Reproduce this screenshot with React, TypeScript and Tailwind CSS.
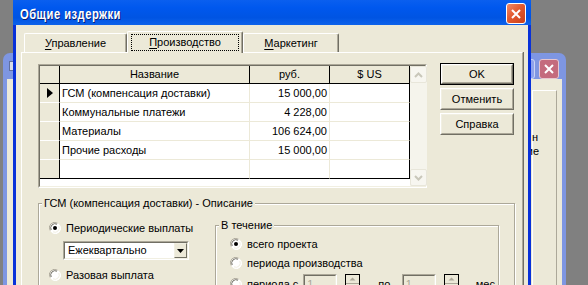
import React from "react";

const font = "font-['Liberation_Sans',Arial,sans-serif] text-[11px] leading-[13px] text-black";

function Radio({ checked }: { checked?: boolean }) {
  return (
    <svg width="12" height="12" viewBox="0 0 12 12" className="shrink-0">
      <circle cx="6" cy="6" r="5.5" fill="#fff" />
      <path d="M1.2 8.5 A5.3 5.3 0 0 1 8.5 1.2" fill="none" stroke="#ACA899" strokeWidth="1" />
      <path d="M2.2 8.0 A4.3 4.3 0 0 1 8.0 2.2" fill="none" stroke="#716F64" strokeWidth="1" />
      <path d="M10.8 3.5 A5.3 5.3 0 0 1 3.5 10.8" fill="none" stroke="#fff" strokeWidth="1" />
      <path d="M9.8 4.0 A4.3 4.3 0 0 1 4.0 9.8" fill="none" stroke="#F1EFE2" strokeWidth="1" />
      {checked && <circle cx="6" cy="6" r="2" fill="#000" />}
    </svg>
  );
}

function RadioRow({ checked, label, className = "" }: { checked?: boolean; label: string; className?: string }) {
  return (
    <div className={`flex items-center gap-[5px] h-[16px] ${className}`}>
      <Radio checked={checked} />
      <span className="whitespace-nowrap">{label}</span>
    </div>
  );
}

function Chevron({ up }: { up?: boolean }) {
  return (
    <svg width="9" height="6" viewBox="0 0 9 6">
      <path d={up ? "M1 5 L4.5 1.5 L8 5" : "M1 1 L4.5 4.5 L8 1"} fill="none" stroke="#C9C7BA" strokeWidth="2" />
    </svg>
  );
}

function ScrollBtn({ up }: { up?: boolean }) {
  return (
    <div className="h-[17px] w-[17px] flex items-center justify-center rounded-[2px] border border-[#E8E6DA] bg-[#F7F6F0]">
      <Chevron up={up} />
    </div>
  );
}

function Button({ label, def }: { label: string; def?: boolean }) {
  return (
    <div className={`h-[22px] w-[74px] shrink-0 ${def ? "border border-black" : ""} bg-[#ECE9D8]`}>
      <div className="h-full w-full border border-t-white border-l-white border-r-[#716F64] border-b-[#716F64] flex items-center justify-center">
        <div className="h-full w-full border border-t-[#F1EFE2] border-l-[#F1EFE2] border-r-[#ACA899] border-b-[#ACA899] flex items-center justify-center">
          <span>{label}</span>
        </div>
      </div>
    </div>
  );
}

function Spin() {
  return (
    <div className="h-[20px] w-[15px] border border-black bg-[#ECE9D8] flex flex-col">
      <div className="h-[9px] border-b border-[#ACA899] flex items-center justify-center">
        <svg width="7" height="4" viewBox="0 0 7 4"><path d="M0.5 3.5 L3.5 0.5 L6.5 3.5 Z" fill="#ACA899" /></svg>
      </div>
    </div>
  );
}

function NumEdit() {
  return (
    <div className="h-[20px] w-[34px] shrink-0 border border-t-[#ACA899] border-l-[#ACA899] border-b-white border-r-white">
      <div className="h-full w-full border border-t-[#716F64] border-l-[#716F64] border-b-[#F1EFE2] border-r-[#F1EFE2] bg-[#ECE9D8] pl-[2px] text-[#ACA899] leading-[16px]">
        1
      </div>
    </div>
  );
}

const rows = [
  { name: "ГСМ (компенсация доставки)", rub: "15 000,00", cur: true },
  { name: "Коммунальные платежи", rub: "4 228,00" },
  { name: "Материалы", rub: "106 624,00" },
  { name: "Прочие расходы", rub: "15 000,00" },
  { name: "", rub: "" },
];

function Grid() {
  return (
    <div className="w-[389px] h-[124px] shrink-0 border border-t-[#ACA899] border-l-[#ACA899] border-b-white border-r-white">
      <div className="h-full w-full border border-t-[#716F64] border-l-[#716F64] border-b-[#F1EFE2] border-r-[#F1EFE2] bg-white flex">
        <div className="flex-1 flex flex-col">
          <div className="grid grid-cols-[20px_190px_80px_80px] h-[18px] shrink-0">
            <div className="bg-[#ECE9D8] border-r border-b border-black" />
            <div className="bg-[#ECE9D8] border-r border-b border-black flex items-center justify-center">Название</div>
            <div className="bg-[#ECE9D8] border-r border-b border-black flex items-center justify-center">руб.</div>
            <div className="bg-[#ECE9D8] border-r border-b border-black flex items-center justify-center">$ US</div>
          </div>
          {rows.map((r, i) => {
            const last = i === rows.length - 1;
            const bb = last ? "border-b border-b-black" : "border-b border-b-[#ECE9D8]";
            return (
              <div key={i} className="grid grid-cols-[20px_190px_80px_80px] h-[19px] shrink-0">
                <div className={`bg-[#ECE9D8] border-r border-r-black ${last ? "border-b border-b-black" : "border-b border-b-white"} flex items-center justify-center`}>
                  {r.cur && (
                    <svg width="6" height="10" viewBox="0 0 6 10" className="ml-[1px]"><path d="M0 0 L6 5 L0 10 Z" fill="#000" /></svg>
                  )}
                </div>
                <div className={`border-r border-r-[#ECE9D8] ${bb} flex items-center pl-[2px]`}>{r.name}</div>
                <div className={`border-r border-r-[#ECE9D8] ${bb} flex items-center justify-end pr-[2px]`}>{r.rub}</div>
                <div className={`border-r border-r-black ${bb}`} />
              </div>
            );
          })}
        </div>
        <div className="w-[17px] bg-[#F5F4EC] flex flex-col justify-between">
          <ScrollBtn up />
          <ScrollBtn />
        </div>
      </div>
    </div>
  );
}

function Group({ label, className = "", children }: { label: string; className?: string; children?: React.ReactNode }) {
  return (
    <div className={`relative shrink-0 border border-[#ACA899] shadow-[inset_1px_1px_0_#fff,1px_1px_0_#fff] ${className}`}>
      <span className="absolute -top-[7px] left-[3px] px-[2px] bg-[#ECE9D8] leading-[13px] whitespace-nowrap">{label}</span>
      {children}
    </div>
  );
}

function Combo() {
  return (
    <div className="w-[126px] h-[19px] border border-t-[#ACA899] border-l-[#ACA899] border-b-white border-r-white">
      <div className="h-full w-full border border-t-[#716F64] border-l-[#716F64] border-b-[#F1EFE2] border-r-[#F1EFE2] bg-white flex items-center">
        <span className="flex-1 pl-[3px]">Ежеквартально</span>
        <div className="w-[13px] h-[15px] border border-t-[#F1EFE2] border-l-[#F1EFE2] border-r-[#716F64] border-b-[#716F64] bg-[#ECE9D8] flex items-center justify-center">
          <svg width="7" height="4" viewBox="0 0 7 4"><path d="M0 0 L7 0 L3.5 4 Z" fill="#000" /></svg>
        </div>
      </div>
    </div>
  );
}

function Tab({ label, u, selected, width }: { label: string; u: string; selected?: boolean; width: string }) {
  const rest = label.slice(1);
  return (
    <div
      className={`flex items-center justify-center rounded-t-[2px] border-t border-l border-t-white border-l-white border-r border-r-[#716F64] bg-[#ECE9D8] shadow-[inset_-1px_0_0_#ACA899] ${width} ${
        selected ? "h-[22px] -mb-[1px] relative z-10" : "h-[19px]"
      }`}
    >
      <span className={selected ? "px-[17px] py-[1px] outline outline-1 outline-dotted outline-black" : ""}>
        <span className="underline underline-offset-[2px]">{u}</span>
        {rest}
      </span>
    </div>
  );
}

export default function App() {
  return (
    <div className={`relative w-[588px] h-[285px] overflow-hidden bg-[#808080] ${font}`}>
      {/* background (inactive) window */}
      <div className="absolute left-[3px] top-[53px] w-[563px] h-[260px] rounded-t-[7px] bg-[#7E96E2] pt-[26px] px-[4px]">
        <div className="absolute left-[6px] top-[8px] w-[10px] h-[10px] bg-[#D8DCE8] border border-[#6070A0]" />
        <div className="absolute left-[513px] top-[6px] w-[19px] h-[20px] rounded-[3px] border border-[#C9D3F5] bg-[#8FA3EC]" />
        <div className="absolute left-[536px] top-[6px] w-[20px] h-[20px] rounded-[3px] border border-[#E7C7CF] bg-[#C46B7D] flex items-center justify-center">
          <svg width="12" height="12" viewBox="0 0 12 12"><path d="M2 2 L10 10 M10 2 L2 10" stroke="#fff" strokeWidth="2" /></svg>
        </div>
        <div className="relative h-full w-full bg-[#ECE9D8]">
          <div className="absolute left-[525px] top-[11px] w-[25px] h-[200px] border-t border-l border-t-white border-l-white border-r border-r-[#ACA899]" />
          <span className="absolute left-[511px] top-[52px] text-right w-[20px]">н</span>
          <span className="absolute left-[509px] top-[66px] text-right w-[23px]">ие</span>
        </div>
      </div>

      {/* main dialog */}
      <div className="absolute left-[13px] top-0 w-[518px] h-[300px] bg-[#0831D9] px-[3px] flex flex-col">
        <div className="h-[25px] shrink-0 -mx-[3px] px-[7px] bg-[linear-gradient(180deg,#0A5FEF_0%,#0058EE_30%,#0054E3_70%,#0D62EA_100%)] flex items-center relative">
          <span className="inline-block origin-left scale-x-[0.8] whitespace-nowrap font-['Liberation_Sans',Arial,sans-serif] font-bold text-[14px] leading-[16px] text-white tracking-[0.6px] [text-shadow:1px_1px_0_#0A1C6E] pt-[3px]">
            Общие издержки
          </span>
          <div className="absolute left-[493px] top-[3px] w-[20px] h-[21px] rounded-[3px] border border-white bg-[linear-gradient(135deg,#F08A6A_0%,#E35A30_45%,#C8401A_100%)] flex items-center justify-center">
            <svg width="12" height="12" viewBox="0 0 12 12"><path d="M2 2 L10 10 M10 2 L2 10" stroke="#fff" strokeWidth="2" /></svg>
          </div>
        </div>
        <div className="flex-1 bg-[#ECE9D8] flex flex-col min-h-0">
          <div className="flex items-end h-[27px] shrink-0 pl-[8px]">
            <Tab label="Управление" u="У" width="w-[103px]" />
            <Tab label="Производство" u="П" selected width="w-[116px]" />
            <Tab label="Маркетинг" u="М" width="w-[96px]" />
          </div>
          <div className="ml-[5px] w-[502px] flex-1 border-t border-l border-white border-r border-r-[#ACA899] shadow-[1px_0_0_#716F64] pl-[16px] pt-[11px]">
            <div className="flex gap-[13px]">
              <Grid />
              <div className="flex flex-col gap-[3px] -mt-[1px]">
                <Button label="OK" def />
                <Button label="Отменить" />
                <Button label="Справка" />
              </div>
            </div>
            <Group label="ГСМ (компенсация доставки) - Описание" className="mt-[15px] w-[477px] h-[200px]">
              <div className="flex">
                <div className="w-[176px] shrink-0 pl-[10px] pt-[16px] flex flex-col">
                  <RadioRow checked label="Периодические выплаты" />
                  <div className="pl-[14px] mt-[5px]">
                    <Combo />
                  </div>
                  <RadioRow label="Разовая выплата" className="mt-[7px]" />
                </div>
                <Group label="В течение" className="mt-[21px] w-[284px] h-[120px]">
                  <div className="pl-[14px] pt-[10px] flex flex-col gap-[3px]">
                    <RadioRow checked label="всего проекта" />
                    <RadioRow label="периода производства" />
                    <div className="flex items-center gap-[5px] h-[20px]">
                      <Radio />
                      <span className="w-[57px] whitespace-nowrap">периода с</span>
                      <NumEdit />
                      <div className="ml-[3px]"><Spin /></div>
                      <span className="ml-[13px] w-[23px]">по</span>
                      <NumEdit />
                      <div className="ml-[3px]"><Spin /></div>
                      <span className="ml-[12px]">мес.</span>
                    </div>
                  </div>
                </Group>
              </div>
            </Group>
          </div>
        </div>
      </div>
    </div>
  );
}
